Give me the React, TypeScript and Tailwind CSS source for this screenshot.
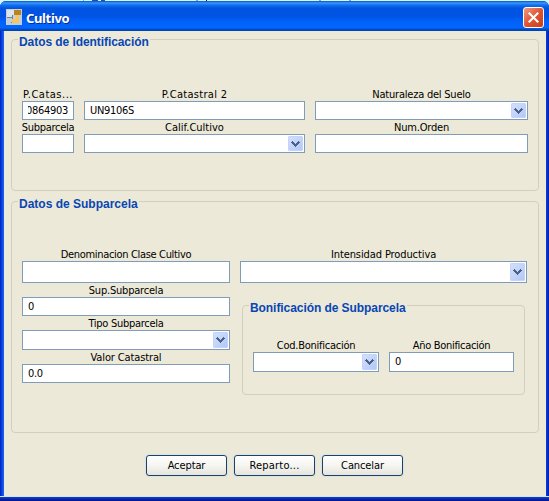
import type { ReactNode } from "react";

function Label({ children, className = "" }: { children: ReactNode; className?: string }) {
  return (
    <div className={`flex h-[14px] items-center justify-center pt-[2px] leading-[14px] whitespace-nowrap ${className}`}>
      <span>{children}</span>
    </div>
  );
}

function TextField({ value = "", className = "" }: { value?: string; className?: string }) {
  return (
    <div className={`flex h-[19px] items-center border border-[#7f9db9] bg-white px-[5px] leading-[14px] tracking-[-0.3px] whitespace-nowrap ${className}`}>
      {value}
    </div>
  );
}

function ScrolledField({ value }: { value: string }) {
  return (
    <div className="flex h-[19px] border border-[#7f9db9] bg-white px-[5px]">
      <div className="flex flex-1 items-center justify-end overflow-hidden leading-[14px] tracking-[-0.3px]">
        <span>{value}</span>
      </div>
    </div>
  );
}

function Combo({ className = "" }: { className?: string }) {
  return (
    <div className={`flex h-[19px] justify-end border border-[#7f9db9] bg-white p-px ${className}`}>
      <div className="flex w-[15px] items-center justify-center rounded-[1px] border border-[#c3d3fb] bg-linear-to-br from-[#d3e0fd] to-[#b3c8f8]">
        <svg className="shrink-0" width="9" height="6" viewBox="0 0 9 6" fill="#4d6185" shapeRendering="crispEdges">
          <path d="M1 0h1v1h-1zM7 0h1v1h-1zM0 1h3v1h-3zM6 1h3v1h-3zM1 2h3v1h-3zM5 2h3v1h-3zM2 3h5v1h-5zM3 4h3v1h-3zM4 5h1v1h-1z" />
        </svg>
      </div>
    </div>
  );
}

function Group({ title, titleClass, className, children }: { title: string; titleClass: string; className: string; children: ReactNode }) {
  return (
    <div className={`rounded-[4px] border border-[#d0d0bf] ${className}`}>
      <div className={`-mt-[5px] ml-[6px] h-[15px] bg-[#ece9d8] pl-px font-['Liberation_Sans',sans-serif] text-[12px] leading-[15px] font-bold whitespace-nowrap text-[#0846b4] ${titleClass}`}>
        {title}
      </div>
      {children}
    </div>
  );
}

function Button({ children, className = "" }: { children: ReactNode; className?: string }) {
  return (
    <button className={`flex h-[21px] w-[81px] items-center justify-center rounded-[3px] border border-[#1b4268] bg-linear-to-b from-white via-[#f5f5f1] to-[#e6e4dc] leading-[14px] shadow-[0_0_1px_1px_#dbe4e3] ${className}`}>
      {children}
    </button>
  );
}

export default function App() {
  return (
    <div className="h-[501px] w-[549px] overflow-hidden bg-[#d3f6fa] font-['DejaVu_Sans_Condensed','DejaVu_Sans',sans-serif] text-[11px] text-black [font-stretch:condensed]">
      <div className="h-px bg-[linear-gradient(90deg,transparent_83px,#6fa5d8_83px,#6fa5d8_84px,transparent_84px,transparent_92px,#1d4fb0_92px,#1d4fb0_98px,transparent_98px,transparent_101px,#1d4fb0_101px,#1d4fb0_105px,transparent_105px,transparent_196px,#6fa5d8_196px,#6fa5d8_198px,transparent_198px,transparent_206px,#061a50_206px,#061a50_207px,transparent_207px,transparent_319px,#6fa5d8_319px,#6fa5d8_321px,transparent_321px,transparent_349px,#6fa5d8_349px,#6fa5d8_351px,transparent_351px)]" />
      <div className="flex h-[500px] flex-col overflow-hidden rounded-t-[6px] bg-[#0831d9]">
        <header className="flex h-[30px] shrink-0 items-center bg-[linear-gradient(180deg,#0753c5_0px,#3c98fb_2px,#1271f0_4px,#0254e0_7px,#0054e3_15px,#0162fb_21px,#0166ff_27px,#0150d0_28px,#0041a8_30px)] pt-[2px] pr-[5px] pl-[6px]">
          <svg width="16" height="16" viewBox="0 0 16 16" shapeRendering="crispEdges">
            <path fill="#c2ced8" d="M0 0h16v16H0z" />
            <path fill="#dde5ea" d="M1 1h7v7H1z" />
            <path fill="#b9831f" d="M8 1h7v5H8z" />
            <path fill="#f8c45c" d="M6 6h7v8H6z" />
            <path fill="#c9ced0" d="M6 6h4v4H6z" />
            <path fill="#71818e" d="M1 8h6v1H1zM6 6h1v4H6zM5 13h1v1H5z" />
          </svg>
          <h1 className="ml-1 flex-1 pt-px font-['Noto_Sans',sans-serif] text-[13px] leading-4 font-bold tracking-[-0.35px] text-white [text-shadow:1px_1px_0_#0a2d91]">Cultivo</h1>
          <button aria-label="Cerrar" className="flex h-[21px] w-[21px] items-center justify-center rounded-[3px] border border-white bg-linear-to-br from-[#ee9a7e] via-[#e15333] to-[#c83d18]">
            <svg width="11" height="11" viewBox="0 0 11 11" stroke="white" strokeWidth="2.1">
              <path d="M.7 .7l9.6 9.6M10.3 .7l-9.6 9.6" />
            </svg>
          </button>
        </header>
        <div className="flex flex-1 bg-[linear-gradient(90deg,#001bb5_0px,#0735d4_1px,#0a45e4_2px,#1a66f0_4px,#0838cf_5px,#0838cf_547px,#001ca8_549px)] pr-[3px] pl-1">
          <main className="flex w-[542px] flex-col bg-[#ece9d8] pt-2">
            <Group title="Datos de Identificación" titleClass="w-[132px] tracking-[-0.07px]" className="mx-[7px] h-[152px] w-[528px]">
              <div className="ml-[10px] grid grid-cols-[52px_221px_213px] gap-x-[10px] pt-[37px]">
                <Label className="tracking-[0.5px]">P.Catas...</Label>
                <Label className="tracking-[0.3px]">P.Catastral 2</Label>
                <Label className="tracking-[-0.22px]">Naturaleza del Suelo</Label>
                <ScrolledField value="0864903" />
                <TextField value="UN9106S" />
                <Combo />
                <Label className="tracking-[-0.3px]">Subparcela</Label>
                <Label>Calif.Cultivo</Label>
                <Label className="tracking-[-0.2px]">Num.Orden</Label>
                <TextField />
                <Combo />
                <TextField />
              </div>
            </Group>
            <Group title="Datos de Subparcela" titleClass="w-[121px]" className="mx-[7px] mt-[10px] h-[232px] w-[528px]">
              <div className="ml-[10px] flex gap-[10px] pt-[35px]">
                <div className="w-[208px]">
                  <Label className="tracking-[-0.33px]">Denominacion Clase Cultivo</Label>
                  <TextField className="h-[22px]!" />
                  <Label className="tracking-[-0.2px]">Sup.Subparcela</Label>
                  <TextField value="0" />
                  <Label className="tracking-[-0.27px]">Tipo Subparcela</Label>
                  <Combo className="h-[20px]!" />
                  <Label className="tracking-[-0.13px]">Valor Catastral</Label>
                  <TextField value="0.0" />
                </div>
                <div className="w-[287px]">
                  <Label className="tracking-[-0.1px]">Intensidad Productiva</Label>
                  <Combo className="h-[22px]!" />
                  <Group title="Bonificación de Subparcela" titleClass="w-[158px] tracking-[-0.07px]" className="mt-[22px] ml-[2px] h-[90px] w-[283px]">
                    <div className="ml-[10px] grid grid-cols-[126px_125px] gap-x-[10px] pt-[22px]">
                      <Label className="tracking-[-0.25px]">Cod.Bonificación</Label>
                      <Label className="tracking-[-0.3px]">Año Bonificación</Label>
                      <Combo className="h-[20px]!" />
                      <TextField value="0" className="h-[20px]!" />
                    </div>
                  </Group>
                </div>
              </div>
            </Group>
            <div className="mt-[22px] flex justify-center gap-[7px] pr-px">
              <Button className="tracking-[-0.1px]">Aceptar</Button>
              <Button className="tracking-[0.2px]">Reparto...</Button>
              <Button className="tracking-[-0.1px]">Cancelar</Button>
            </div>
          </main>
        </div>
        <div className="h-[5px] shrink-0 bg-[linear-gradient(180deg,#d5e4ec_0px,#d5e4ec_1px,#1540c0_1px,#0729b5_3px,#00128c_5px)]" />
      </div>
    </div>
  );
}
